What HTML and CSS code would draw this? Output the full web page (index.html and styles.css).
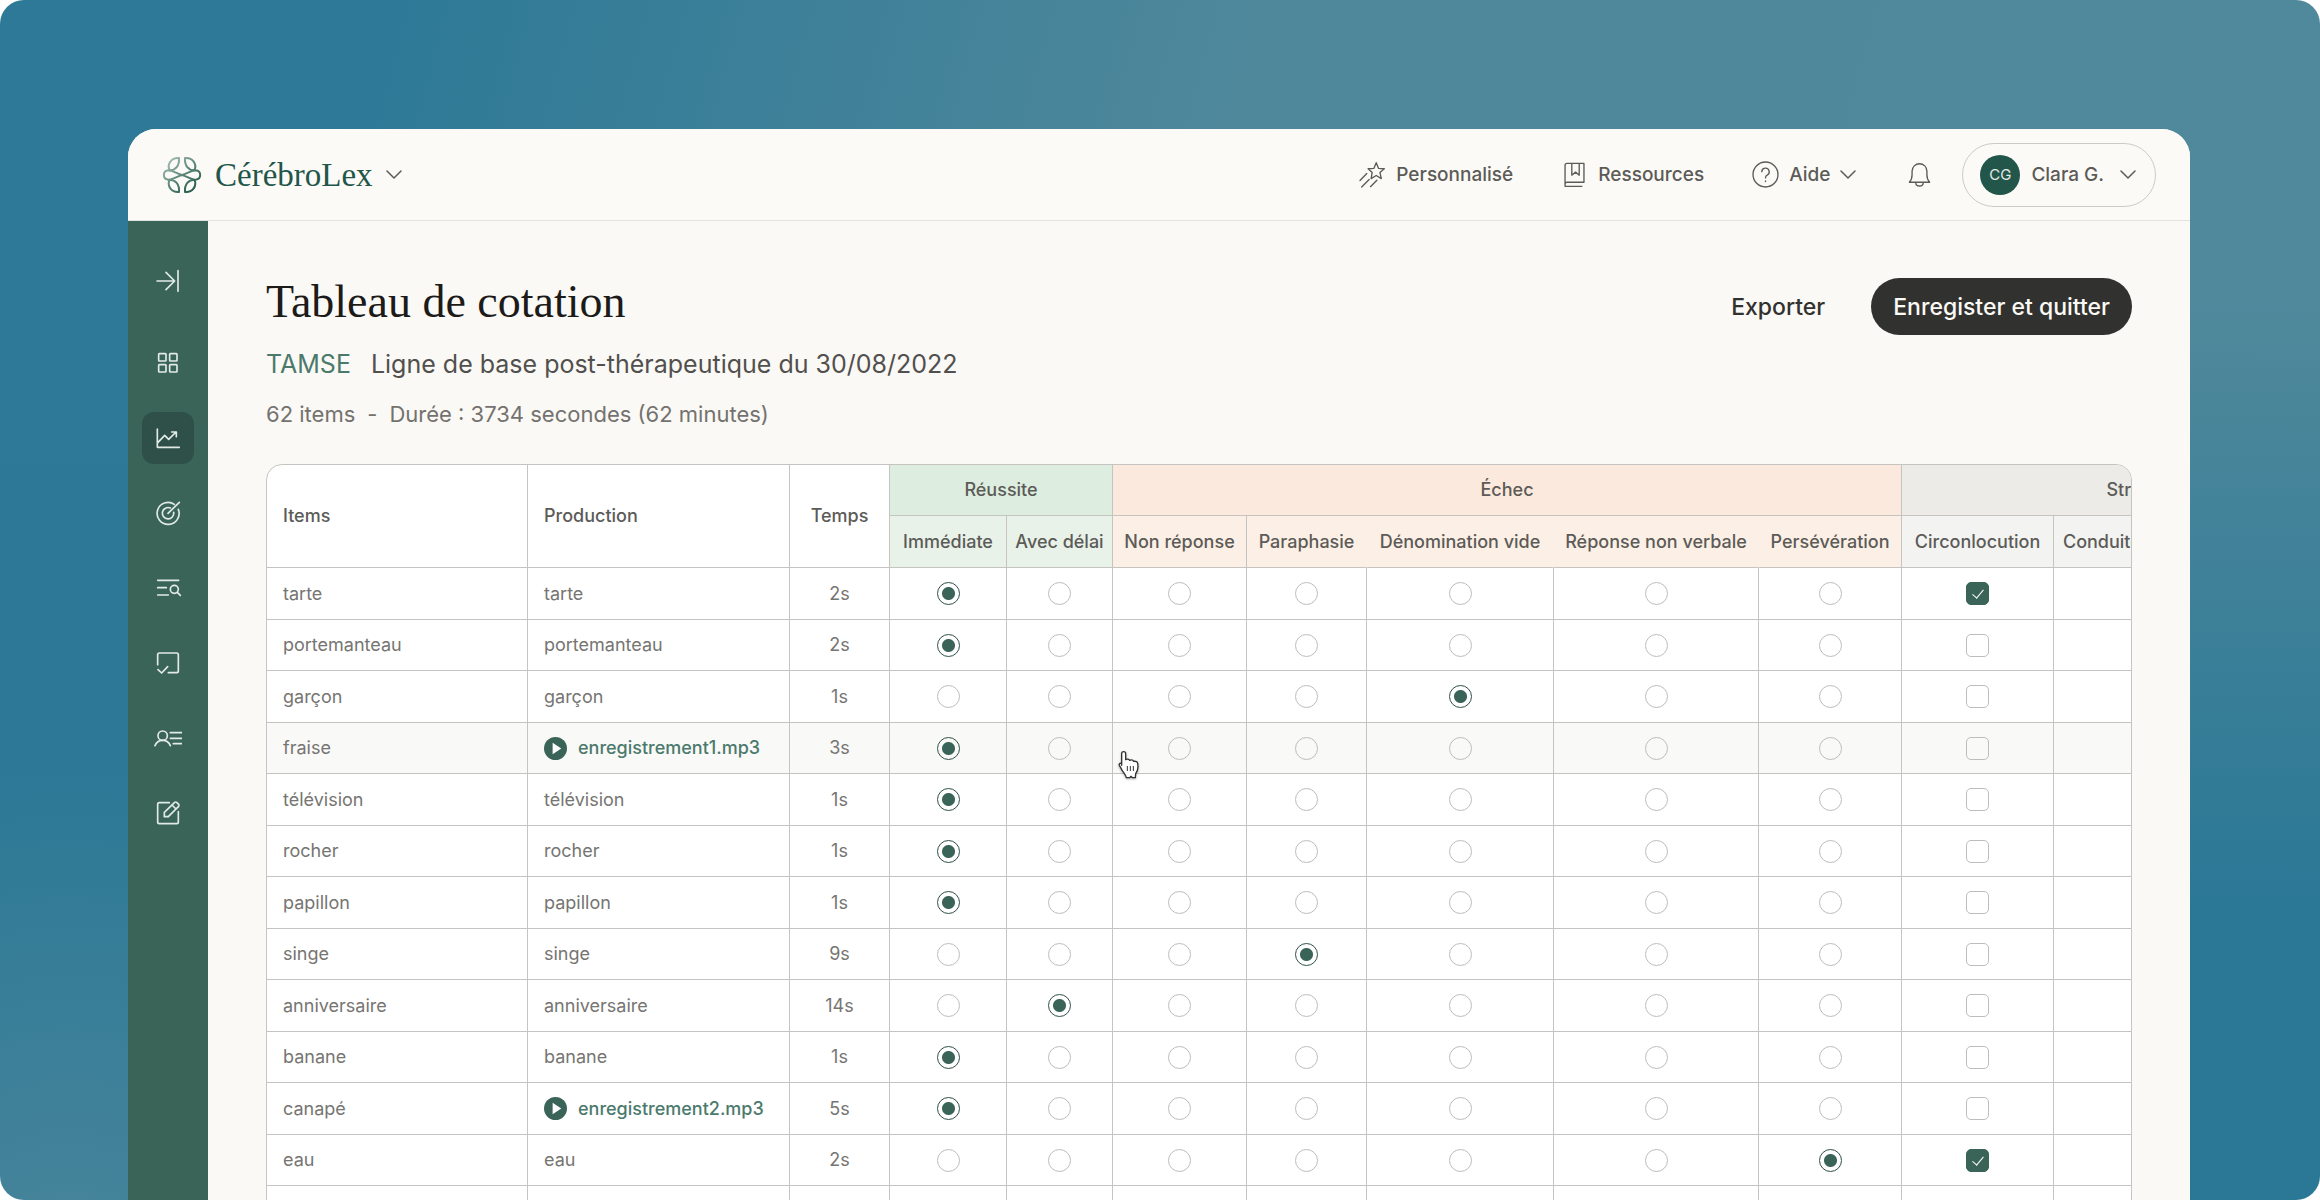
FILE: index.html
```html
<!DOCTYPE html>
<html lang="fr">
<head>
    <meta charset="UTF-8">
    <meta name="viewport" content="width=device-width, initial-scale=1.0">
    <title>CérébroLex | Tableau de cotation</title>
    <link rel="stylesheet" href="styles.css">
</head>
<body>
    <div class="stage">
        <div class="window">
            <header class="topbar">
                <button class="brand" type="button">
                    <svg class="brand-logo" viewBox="127 107 120 114" aria-hidden="true">
                        <defs>
                            <linearGradient id="logo-gradient" gradientUnits="userSpaceOnUse" x1="135" y1="112" x2="225" y2="215">
                                <stop offset="0" stop-color="#b4c7bf"/>
                                <stop offset="0.5" stop-color="#5f8a7d"/>
                                <stop offset="1" stop-color="#22564a"/>
                            </linearGradient>
                        </defs>
                        <g fill="none" stroke="url(#logo-gradient)" stroke-width="6" stroke-linejoin="round">
                            <path d="M178 113C155 111 141 132 150 150C167 150 180 136 178 113Z"/>
                            <path d="M196 113C219 111 233 132 224 150C207 150 194 136 196 113Z"/>
                            <path d="M178 215C155 217 141 196 150 178C167 178 180 192 178 215Z"/>
                            <path d="M196 215C219 217 233 196 224 178C207 178 194 192 196 215Z"/>
                            <path d="M187 164C172 160 158 150 146 150C128 152 128 176 146 178C158 178 172 168 187 164C202 160 216 150 228 150C246 152 246 176 228 178C216 178 202 168 187 164Z"/>
                        </g>
                    </svg>
                    <span class="brand-name">CérébroLex</span>
                    <svg class="chevron" viewBox="0 0 16 10" aria-hidden="true"><path d="M1 1l7 7 7-7"/></svg>
                </button>

                <nav class="topnav">
                    <a class="topnav-link" href="#">
                        <svg class="nav-icon" viewBox="54 94 80 80" aria-hidden="true">
                            <path d="M105 99l7 17 17 1-13 11 4 18-15-9-15 9 3-18-12-11 17-1zM57 152l20-21M62 171l22-22M88 170l19-19"/>
                        </svg>
                        Personnalisé
                    </a>
                    <a class="topnav-link" href="#">
                        <svg class="nav-icon" viewBox="664 94 80 80" aria-hidden="true">
                            <path d="M732 157V101H682q-6 0-6 6V163q0-6 6-6H732M676 163v6H726M696 101v35l11-9 11 9v-35"/>
                        </svg>
                        Ressources
                    </a>
                    <a class="topnav-link" href="#">
                        <svg class="nav-icon" viewBox="1234 94 80 80" aria-hidden="true">
                            <circle cx="1274" cy="134" r="37"/>
                            <path d="M1263 126a11 11 0 1 1 16 10q-5 2-5 8M1274 153v2"/>
                        </svg>
                        Aide
                        <svg class="chevron" viewBox="0 0 16 10" aria-hidden="true"><path d="M1 1l7 7 7-7"/></svg>
                    </a>
                </nav>

                <button class="bell" type="button" aria-label="Notifications">
                    <svg class="nav-icon" viewBox="498 94 80 80" aria-hidden="true">
                        <path d="M508 157c6-6 8-12 8-22v-11a22 22 0 0 1 44 0v11c0 10 2 16 8 22zM527 159a11 9 0 0 0 22 0"/>
                    </svg>
                </button>

                <button class="account" type="button">
                    <span class="avatar">CG</span>
                    Clara G.
                    <svg class="chevron" viewBox="0 0 16 10" aria-hidden="true"><path d="M1 1l7 7 7-7"/></svg>
                </button>
            </header>

            <div class="body">
                <nav class="sidebar" aria-label="Menu principal">
                    <a class="side-link side-toggle" href="#" aria-label="Déplier le menu">
                        <svg viewBox="72 141 84 84"><path d="M81 183H134M108 157l26 26-26 26M144 152V214"/></svg>
                    </a>
                    <a class="side-link" href="#" aria-label="Tableau de bord">
                        <svg viewBox="72 390 84 84">
                            <rect x="86" y="404" width="22" height="22" rx="2"/>
                            <rect x="119" y="404" width="22" height="22" rx="2"/>
                            <rect x="86" y="437" width="22" height="22" rx="2"/>
                            <rect x="119" y="437" width="22" height="22" rx="2"/>
                        </svg>
                    </a>
                    <a class="side-link active" href="#" aria-label="Résultats" aria-current="page">
                        <svg viewBox="72 613 84 84"><path d="M82 628V683H148M84 668l20-21 12 12 22-22M125 637h14v14"/></svg>
                    </a>
                    <a class="side-link" href="#" aria-label="Objectifs">
                        <svg viewBox="72 836 84 84"><path d="M133 852A33 33 0 1 0 145 867M121 863A17 17 0 1 0 131 876M114 879L148 846"/></svg>
                    </a>
                    <a class="side-link" href="#" aria-label="Recherche">
                        <svg viewBox="72 131 84 84">
                            <circle cx="133" cy="177" r="12"/>
                            <path d="M83 150H146M83 172H109M83 194H115M142 186l9 9"/>
                        </svg>
                    </a>
                    <a class="side-link" href="#" aria-label="Évaluations">
                        <svg viewBox="72 354 84 84"><path d="M83 401V371q0-5 5-5H140q5 0 5 5V420q0 5-5 5H115M84 416l11 10 18-19"/></svg>
                    </a>
                    <a class="side-link" href="#" aria-label="Patients">
                        <svg viewBox="72 576 84 84">
                            <circle cx="98" cy="611" r="14"/>
                            <path d="M75 641q6-16 23-16t23 16M121 602H156M121 619H156M130 635H156"/>
                        </svg>
                    </a>
                    <a class="side-link" href="#" aria-label="Notes">
                        <svg viewBox="72 800 84 84"><path d="M118 811H88q-5 0-5 5V869q0 5 5 5H140q5 0 5-5V838M103 853V840L134 810q3-2 6 0l6 6q2 3 0 6L115 853ZM126 818l12 12"/></svg>
                    </a>
                </nav>

                <main class="content">
                    <div class="page-head">
                        <div class="page-title">
                            <h1>Tableau de cotation</h1>
                            <p class="subtitle"><span class="test-name">TAMSE</span><span>Ligne de base post-thérapeutique du 30/08/2022</span></p>
                            <p class="meta"><span>62 items</span><span>-</span><span>Durée : 3734 secondes (62 minutes)</span></p>
                        </div>
                        <div class="actions">
                            <button class="btn" type="button">Exporter</button>
                            <button class="btn btn-dark" type="button">Enregister et quitter</button>
                        </div>
                    </div>

                    <div class="table-wrap">
                        <table class="score-table">
                            <colgroup>
                                <col class="c-item"><col class="c-prod"><col class="c-time">
                                <col class="c-immediate"><col class="c-delay">
                                <col class="c-none"><col class="c-para"><col class="c-empty"><col class="c-nonverbal"><col class="c-persev">
                                <col class="c-circon"><col class="c-approach"><col class="c-other">
                            </colgroup>
                            <thead>
                                <tr>
                                    <th class="left" rowspan="2">Items</th>
                                    <th class="left" rowspan="2">Production</th>
                                    <th rowspan="2">Temps</th>
                                    <th class="success" colspan="2">Réussite</th>
                                    <th class="failure" colspan="5">Échec</th>
                                    <th class="strategy" colspan="3">Stratégies</th>
                                </tr>
                                <tr>
                                    <th class="success-sub">Immédiate</th>
                                    <th class="success-sub">Avec délai</th>
                                    <th class="failure-sub">Non réponse</th>
                                    <th class="failure-sub open">Paraphasie</th>
                                    <th class="failure-sub open">Dénomination vide</th>
                                    <th class="failure-sub open">Réponse non verbale</th>
                                    <th class="failure-sub">Persévération</th>
                                    <th class="strategy-sub">Circonlocution</th>
                                    <th class="strategy-sub">Conduite d'approche</th>
                                    <th class="strategy-sub">Autre</th>
                                </tr>
                            </thead>
                            <tbody id="rows"></tbody>
                        </table>
                        <svg class="pointer" viewBox="704 208 78 93" aria-hidden="true">
                            <path class="pointer-hand" d="M727 254V219a6 6 0 0 1 12 0V237c4-3 10-2 12 2c5-2 10-1 12 3c6-1 12 1 12 7c2 10 0 22-6 30l-1 12h-9l-4-4-4 4h-10c-2-8-6-12-10-18c-4-5-6-12-10-17c-4-6 1-10 6-7z"/>
                            <path class="pointer-lines" d="M744 256v15M753 256v15M762 256v15"/>
                        </svg>
                    </div>
                </main>
            </div>
        </div>
    </div>

    <script>
        const choices = ['Immédiate', 'Avec délai', 'Non réponse', 'Paraphasie', 'Dénomination vide', 'Réponse non verbale', 'Persévération'];
        const strategies = ['Circonlocution', "Conduite d'approche", 'Autre'];

        // choice = index de la colonne cochée, strategy = stratégie cochée
        const items = [
            { name: 'tarte', time: 2, choice: 0, strategy: 0 },
            { name: 'portemanteau', time: 2, choice: 0 },
            { name: 'garçon', time: 1, choice: 4 },
            { name: 'fraise', time: 3, choice: 0, audio: 'enregistrement1.mp3', hover: true },
            { name: 'télévision', time: 1, choice: 0 },
            { name: 'rocher', time: 1, choice: 0 },
            { name: 'papillon', time: 1, choice: 0 },
            { name: 'singe', time: 9, choice: 3 },
            { name: 'anniversaire', time: 14, choice: 1 },
            { name: 'banane', time: 1, choice: 0 },
            { name: 'canapé', time: 5, choice: 0, audio: 'enregistrement2.mp3' },
            { name: 'eau', time: 2, choice: 6, strategy: 0 },
            { name: 'bougie', time: 2, choice: 0 }
        ];

        const playIcon = '<svg class="play" viewBox="0 0 24 24" aria-hidden="true"><circle cx="12" cy="12" r="12"/><path d="M9 6l9 6-9 6z"/></svg>';

        document.getElementById('rows').innerHTML = items.map(function(item, i) {
            const production = item.audio
                ? `<a class="audio" href="#">${playIcon}${item.audio}</a>`
                : item.name;
            const radios = choices.map((label, c) =>
                `<td><input type="radio" name="item-${i}" aria-label="${item.name} : ${label}"${item.choice === c ? ' checked' : ''}></td>`
            ).join('');
            const boxes = strategies.map((label, s) =>
                `<td><input type="checkbox" aria-label="${item.name} : ${label}"${item.strategy === s ? ' checked' : ''}></td>`
            ).join('');
            return `<tr${item.hover ? ' class="hovered"' : ''}><td class="left">${item.name}</td><td class="left">${production}</td><td>${item.time}s</td>${radios}${boxes}</tr>`;
        }).join('');
    </script>
</body>
</html>
```
FILE: styles.css
```css
* {
    box-sizing: border-box;
}

body {
    margin: 0;
    background: #fff;
    color: #5c5b58;
    font-family: Inter, "Liberation Sans", sans-serif;
    font-size: 19px;
}

button {
    padding: 0;
    border: none;
    background: none;
    color: inherit;
    font: inherit;
    cursor: pointer;
}

a {
    color: inherit;
    text-decoration: none;
}

h1, p {
    margin: 0;
}

svg {
    display: block;
    flex: none;
}

.stage {
    height: 100vh;
    padding: 129px 130px 0 128px;
    border-radius: 24px;
    overflow: hidden;
    background:
        radial-gradient(ellipse 22% 45% at 3% 108%, #4a869b 0%, rgba(74, 134, 155, 0) 100%),
        linear-gradient(to bottom, rgba(43, 120, 150, 0) 25%, #2b7896 75%),
        linear-gradient(105deg, #2d7997 14%, #4f889b 48%, #50899b 100%);
}

.window {
    display: flex;
    flex-direction: column;
    height: 100%;
    border-radius: 28px 28px 0 0;
    overflow: hidden;
    background: #fbf9f5;
}

/* barre du haut */

.topbar {
    display: flex;
    align-items: center;
    flex: none;
    height: 92px;
    padding: 0 34px;
    border-bottom: 1px solid #e4e2de;
    background: #fcfaf6;
    font-weight: 500;
}

.brand {
    display: flex;
    align-items: center;
    margin-right: auto;
}

.brand-logo {
    width: 40px;
    height: 38px;
    margin-right: 13px;
}

.brand-name {
    margin-right: 13px;
    color: #22564a;
    font-family: "Liberation Serif", serif;
    font-size: 33px;
    font-weight: 400;
    line-height: 40px;
}

.chevron {
    width: 16px;
    height: 10px;
    fill: none;
    stroke: #5c5b58;
    stroke-width: 1.5;
    stroke-linecap: round;
    stroke-linejoin: round;
}

.nav-icon {
    width: 27px;
    height: 27px;
    fill: none;
    stroke: #5c5b58;
    stroke-width: 4;
    stroke-linecap: round;
    stroke-linejoin: round;
}

.topnav {
    display: flex;
    align-items: center;
    gap: 48px;
    margin-right: 50px;
}

.topnav-link {
    display: flex;
    align-items: center;
    gap: 10px;
}

.bell {
    margin-right: 29px;
}

.account {
    display: flex;
    align-items: center;
    height: 64px;
    padding: 0 19px 0 17px;
    border: 1px solid #cbcac6;
    border-radius: 32px;
}

.account .chevron {
    margin-left: 16px;
}

.avatar {
    width: 40px;
    height: 40px;
    margin-right: 11px;
    border-radius: 50%;
    background: #22564a;
    color: #e3ebe6;
    font-size: 15px;
    font-weight: 400;
    line-height: 40px;
    text-align: center;
}

.body {
    display: flex;
    flex: 1;
    min-height: 0;
}

/* menu latéral */

.sidebar {
    display: flex;
    flex-direction: column;
    align-items: center;
    gap: 23px;
    flex: none;
    width: 80px;
    padding-top: 34px;
    background: #3b6459;
}

.side-link {
    display: flex;
    align-items: center;
    justify-content: center;
    flex: none;
    width: 52px;
    height: 52px;
    border-radius: 12px;
}

.side-link.active {
    background: #2e5048;
}

.side-link svg {
    width: 28px;
    height: 28px;
    fill: none;
    stroke: #e2eae6;
    stroke-width: 5;
    stroke-linecap: round;
    stroke-linejoin: round;
}

.side-toggle {
    margin-bottom: 7px;
}

/* contenu */

.content {
    flex: 1;
    min-width: 0;
    padding: 57px 58px 0;
}

.page-head {
    display: flex;
    justify-content: space-between;
    align-items: flex-start;
    margin-bottom: 36px;
}

h1 {
    margin-bottom: 22px;
    color: #1c1b1a;
    font-family: "Liberation Serif", serif;
    font-size: 46px;
    font-weight: 400;
    line-height: 48px;
}

.subtitle {
    display: flex;
    gap: 20px;
    margin-bottom: 20px;
    color: #51504e;
    font-size: 25px;
    line-height: 32px;
}

.test-name {
    color: #4b7a6c;
}

.meta {
    display: flex;
    gap: 12px;
    color: #73726f;
    font-size: 22px;
    line-height: 28px;
}

.actions {
    display: flex;
    gap: 24px;
}

.btn {
    height: 57px;
    padding: 0 22px;
    border-radius: 29px;
    color: #313130;
    font-size: 23px;
    font-weight: 500;
}

.btn-dark {
    background: #313130;
    color: #fcfaf6;
}

/* tableau */

.table-wrap {
    position: relative;
    border: 1px solid #c5c4c1;
    border-radius: 16px 16px 0 0;
    overflow: hidden;
    background: #fff;
}

.score-table {
    width: 2132px;
    table-layout: fixed;
    border-collapse: separate;
    border-spacing: 0;
    font-size: 18px;
    text-align: center;
}

.c-item { width: 261px; }
.c-prod { width: 262px; }
.c-time { width: 100px; }
.c-immediate { width: 117px; }
.c-delay { width: 106px; }
.c-none { width: 134px; }
.c-para { width: 120px; }
.c-empty { width: 187px; }
.c-nonverbal { width: 205px; }
.c-persev { width: 143px; }
.c-circon { width: 152px; }
.c-approach { width: 200px; }
.c-other { width: 145px; }

.score-table th,
.score-table td {
    padding: 0;
    border-right: 1px solid #c5c4c1;
    border-bottom: 1px solid #c5c4c1;
    line-height: 24px;
    white-space: nowrap;
}

.score-table th {
    height: 51px;
    color: #5c5b58;
    font-weight: 500;
}

.score-table tr + tr th {
    height: 52px;
}

.score-table td {
    color: #767572;
}

.score-table tbody tr {
    height: 52px;
}

.score-table tbody tr:nth-child(even) {
    height: 51px;
}

.score-table .left {
    padding-left: 16px;
    text-align: left;
}

.score-table .open {
    border-right-color: #fcf0e6;
}

.success { background: #ddeee0; }
.success-sub { background: #e8f2e9; }
.failure { background: #fae9dc; }
.failure-sub { background: #fcf0e6; }
.strategy { background: #ecebe8; }
.strategy-sub { background: #f3f3f1; }

tbody tr:hover,
tbody tr.hovered {
    background: #f9f9f8;
}

.audio {
    display: flex;
    align-items: center;
    gap: 11px;
    color: #4b7a6c;
    font-weight: 500;
}

.play {
    width: 23px;
    height: 23px;
    fill: #3b6459;
}

.play path {
    fill: #fff;
}

input[type="radio"],
input[type="checkbox"] {
    appearance: none;
    display: block;
    width: 23px;
    height: 23px;
    margin: 0 auto;
    border: 1px solid #bebdba;
    border-radius: 50%;
    cursor: pointer;
}

input[type="radio"]:checked {
    border-color: #2e5048;
    background: radial-gradient(circle, #3b6459 6px, transparent 7px);
}

input[type="checkbox"] {
    border-radius: 5px;
}

input[type="checkbox"]:checked {
    border-color: #3b6459;
    background: #3b6459;
}

input[type="checkbox"]:checked::before {
    content: "";
    display: block;
    width: 5px;
    height: 10px;
    margin: 4px auto 0;
    border: solid #fff;
    border-width: 0 1px 1px 0;
    transform: rotate(40deg);
}

/* curseur posé sur la ligne survolée */
.pointer {
    position: absolute;
    left: 847px;
    top: 285px;
    width: 26px;
    height: 31px;
    overflow: visible;
    filter: drop-shadow(0 1px 1px rgba(0, 0, 0, 0.3));
}

.pointer-hand {
    fill: #fff;
    stroke: #333;
    stroke-width: 4;
    stroke-linejoin: round;
}

.pointer-lines {
    stroke: #333;
    stroke-width: 3;
}
```
